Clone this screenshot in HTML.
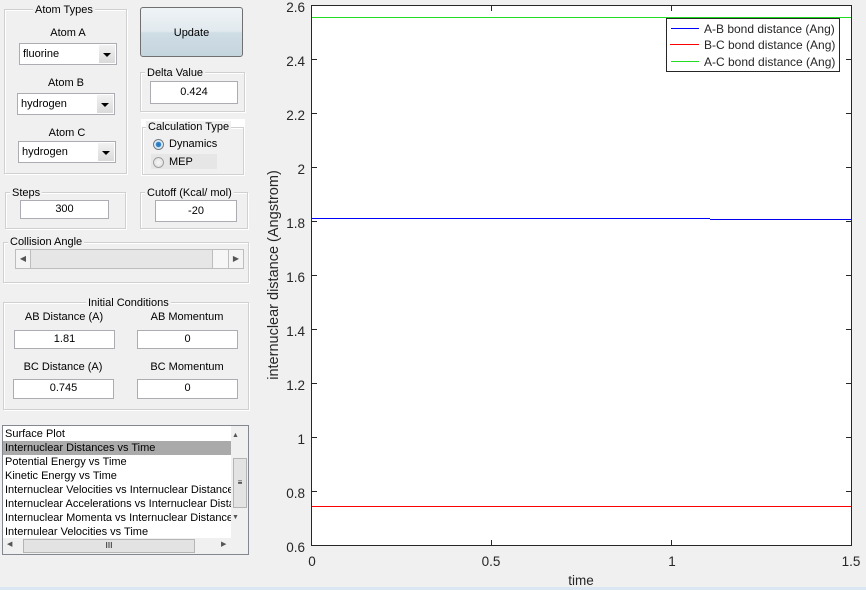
<!DOCTYPE html>
<html><head><meta charset="utf-8"><style>
*{box-sizing:border-box;margin:0;padding:0}
body{width:866px;height:590px;background:#f0f0f0;position:relative;overflow:hidden;font-family:"Liberation Sans",sans-serif;font-size:11px;color:#000}
.a{position:absolute}
.fs{position:absolute;border:1px solid #d0d0d0;box-shadow:inset 1px 1px 0 #fff,1px 1px 0 #fff}
.lg{position:absolute;background:#f0f0f0;padding:0 2px;font-size:11px;line-height:12px;white-space:nowrap}
.inp{position:absolute;background:#fff;border:1px solid #abadb3;text-align:center;font-size:11px;line-height:17px}
.dd{position:absolute;background:#fff;border:1px solid #abadb3;font-size:11px;line-height:20px;padding-left:3px}
.dd b{position:absolute;right:1px;top:1px;bottom:1px;width:16px;background:linear-gradient(#f2f2f2,#dadada)}
.dd b:after{content:"";position:absolute;left:4px;top:8px;border-left:4px solid transparent;border-right:4px solid transparent;border-top:4px solid #000}
.lbl{position:absolute;font-size:11px;text-align:center}
.li{height:14px;line-height:14px;padding-left:2px;white-space:nowrap;overflow:hidden}
</style></head><body>

<div class="fs" style="left:4px;top:9px;width:123px;height:165px"></div>
<div class="lg" style="left:33px;top:4px">Atom Types</div>
<div class="lbl" style="left:19px;top:27px;width:98px">Atom A</div>
<div class="dd" style="left:19px;top:43px;width:98px;height:22px">fluorine<b></b></div>
<div class="lbl" style="left:17px;top:77px;width:98px">Atom B</div>
<div class="dd" style="left:17px;top:93px;width:98px;height:22px">hydrogen<b></b></div>
<div class="lbl" style="left:18px;top:127px;width:98px">Atom C</div>
<div class="dd" style="left:18px;top:141px;width:98px;height:22px">hydrogen<b></b></div>

<div class="a" style="left:140px;top:7px;width:103px;height:50px;border:1px solid #707070;border-radius:3px;background:linear-gradient(#eef3f6 0%,#e2eaef 48%,#cfdde5 52%,#c5d5de 100%);text-align:center;line-height:50px;font-size:11px">Update</div>

<div class="fs" style="left:140px;top:72px;width:105px;height:40px"></div>
<div class="lg" style="left:145px;top:67px">Delta Value</div>
<div class="inp" style="left:150px;top:81px;width:88px;height:23px;line-height:21px">0.424</div>

<div class="a" style="left:141px;top:119px;width:104px;height:57px;background:#fff"></div>
<div class="fs" style="left:142px;top:127px;width:102px;height:48px;background:#f0f0f0"></div>
<div class="lg" style="left:146px;top:121px">Calculation Type</div>
<div class="a" style="left:151px;top:154px;width:66px;height:15px;background:#e6e6e6"></div>
<div class="a" style="left:153px;top:139px;width:11px;height:11px;border-radius:50%;border:1px solid #6f7b86;background:radial-gradient(circle,#1f6fb5 0,#3a8bd0 2.5px,#d9e6f0 3px,#eef2f5 5px)"></div>
<div class="a" style="left:169px;top:138px">Dynamics</div>
<div class="a" style="left:153px;top:157px;width:11px;height:11px;border-radius:50%;border:1px solid #a0a0a0;background:radial-gradient(circle,#f6f6f6,#dcdcdc)"></div>
<div class="a" style="left:169px;top:156px">MEP</div>

<div class="fs" style="left:5px;top:192px;width:121px;height:37px"></div>
<div class="lg" style="left:10px;top:187px">Steps</div>
<div class="inp" style="left:20px;top:200px;width:89px;height:19px">300</div>

<div class="fs" style="left:140px;top:192px;width:108px;height:37px"></div>
<div class="lg" style="left:145px;top:187px">Cutoff (Kcal/ mol)</div>
<div class="inp" style="left:155px;top:200px;width:82px;height:22px;line-height:20px">-20</div>

<div class="fs" style="left:3px;top:242px;width:246px;height:41px"></div>
<div class="lg" style="left:8px;top:236px">Collision Angle</div>
<div class="a" style="left:15px;top:249px;width:229px;height:20px;background:#e6e6e6;border:1px solid #bdbdbd"></div>
<div class="a" style="left:15px;top:249px;width:16px;height:20px;background:#f4f4f4;border:1px solid #bdbdbd;font-size:8px;line-height:18px;text-align:center;color:#555">◀</div>
<div class="a" style="left:212px;top:249px;width:17px;height:20px;background:#f6f6f6;border:1px solid #bdbdbd"></div>
<div class="a" style="left:228px;top:249px;width:16px;height:20px;background:#f4f4f4;border:1px solid #bdbdbd;font-size:8px;line-height:18px;text-align:center;color:#555">▶</div>

<div class="fs" style="left:3px;top:302px;width:246px;height:108px"></div>
<div class="lg" style="left:86px;top:297px">Initial Conditions</div>
<div class="lbl" style="left:14px;top:311px;width:100px">AB Distance (A)</div>
<div class="lbl" style="left:137px;top:311px;width:100px">AB Momentum</div>
<div class="inp" style="left:14px;top:330px;width:101px;height:19px">1.81</div>
<div class="inp" style="left:137px;top:330px;width:101px;height:19px">0</div>
<div class="lbl" style="left:13px;top:361px;width:100px">BC Distance (A)</div>
<div class="lbl" style="left:137px;top:361px;width:100px">BC Momentum</div>
<div class="inp" style="left:13px;top:379px;width:101px;height:20px">0.745</div>
<div class="inp" style="left:137px;top:379px;width:101px;height:20px">0</div>

<div class="a" style="left:2px;top:425px;width:247px;height:130px;background:#fff;border:1px solid #828790;overflow:hidden">
 <div style="position:absolute;left:0;top:1px;width:228px">
  <div class="li">Surface Plot</div>
  <div class="li" style="background:#aaaaaa">Internuclear Distances vs Time</div>
  <div class="li">Potential Energy vs Time</div>
  <div class="li">Kinetic Energy vs Time</div>
  <div class="li">Internuclear Velocities vs Internuclear Distance</div>
  <div class="li">Internuclear Accelerations vs Internuclear Distance</div>
  <div class="li">Internuclear Momenta vs Internuclear Distance</div>
  <div class="li">Internulear Velocities vs Time</div>
 </div>
 <div style="position:absolute;left:228px;top:0;width:17px;height:128px;background:#f0f0f0"></div>
 <div style="position:absolute;left:229px;top:6px;font-size:7px;color:#555">▲</div>
 <div style="position:absolute;left:230px;top:32px;width:14px;height:50px;background:#e3e3e3;border:1px solid #b5b5b5;font-size:8px;text-align:center;line-height:48px">≡</div>
 <div style="position:absolute;left:229px;top:88px;font-size:7px;color:#555">▼</div>
 <div style="position:absolute;left:0;top:112px;width:228px;height:16px;background:#f0f0f0"></div>
 <div style="position:absolute;left:4px;top:114px;font-size:7px;color:#555">◀</div>
 <div style="position:absolute;left:20px;top:113px;width:172px;height:14px;background:#e3e3e3;border:1px solid #b5b5b5;font-size:8px;text-align:center;line-height:12px">III</div>
 <div style="position:absolute;left:218px;top:114px;font-size:7px;color:#555">▶</div>
</div>

<div class="a" style="left:311px;top:5px;width:541px;height:541px;background:#fff;border:1px solid #262626"></div>
<svg class="a" style="left:0;top:0" width="866" height="590">
 <g stroke="#262626" stroke-width="1">
  <line x1="312" y1="59.5" x2="317" y2="59.5"/><line x1="312" y1="113.5" x2="317" y2="113.5"/><line x1="312" y1="167.5" x2="317" y2="167.5"/><line x1="312" y1="221.5" x2="317" y2="221.5"/><line x1="312" y1="275.5" x2="317" y2="275.5"/><line x1="312" y1="329.5" x2="317" y2="329.5"/><line x1="312" y1="383.5" x2="317" y2="383.5"/><line x1="312" y1="437.5" x2="317" y2="437.5"/><line x1="312" y1="491.5" x2="317" y2="491.5"/>
  <line x1="846" y1="59.5" x2="851" y2="59.5"/><line x1="846" y1="113.5" x2="851" y2="113.5"/><line x1="846" y1="167.5" x2="851" y2="167.5"/><line x1="846" y1="221.5" x2="851" y2="221.5"/><line x1="846" y1="275.5" x2="851" y2="275.5"/><line x1="846" y1="329.5" x2="851" y2="329.5"/><line x1="846" y1="383.5" x2="851" y2="383.5"/><line x1="846" y1="437.5" x2="851" y2="437.5"/><line x1="846" y1="491.5" x2="851" y2="491.5"/>
  <line x1="491.5" y1="540" x2="491.5" y2="545"/><line x1="671.5" y1="540" x2="671.5" y2="545"/>
  <line x1="491.5" y1="6" x2="491.5" y2="11"/><line x1="671.5" y1="6" x2="671.5" y2="11"/>
 </g>
 <line x1="312" y1="17.5" x2="851" y2="17.5" stroke="#22dd22" stroke-width="1"/>
 <line x1="312" y1="218.5" x2="710" y2="218.5" stroke="#0000ff" stroke-width="1"/>
 <line x1="710" y1="219.5" x2="851" y2="219.5" stroke="#0000ee" stroke-width="1"/>
 <line x1="312" y1="506.5" x2="851" y2="506.5" stroke="#ff0000" stroke-width="1"/>
 <rect x="666.5" y="18.5" width="173" height="53" fill="#fff" stroke="#262626"/>
 <line x1="671" y1="28.5" x2="699" y2="28.5" stroke="#0000ff"/>
 <line x1="670" y1="44.5" x2="699" y2="44.5" stroke="#ff0000"/>
 <line x1="671" y1="61.5" x2="699" y2="61.5" stroke="#22dd22"/>
 <g font-family="Liberation Sans, sans-serif" font-size="12" fill="#262626">
  <text x="704" y="33">A-B bond distance (Ang)</text>
  <text x="704" y="49">B-C bond distance (Ang)</text>
  <text x="704" y="66">A-C bond distance (Ang)</text>
 </g>
 <g font-family="Liberation Sans, sans-serif" font-size="13.5" fill="#262626" text-anchor="end">
  <text x="305" y="12">2.6</text><text x="305" y="66">2.4</text><text x="305" y="120">2.2</text><text x="305" y="174">2</text><text x="305" y="228">1.8</text><text x="305" y="282">1.6</text><text x="305" y="336">1.4</text><text x="305" y="390">1.2</text><text x="305" y="444">1</text><text x="305" y="498">0.8</text><text x="305" y="552">0.6</text>
 </g>
 <g font-family="Liberation Sans, sans-serif" font-size="13.5" fill="#262626" text-anchor="middle">
  <text x="312" y="566">0</text><text x="491" y="566">0.5</text><text x="672" y="566">1</text><text x="851" y="566">1.5</text>
  <text x="581" y="585">time</text>
  <text x="0" y="0" font-size="14.5" transform="translate(278,275) rotate(-90)">internuclear distance (Angstrom)</text>
 </g>
</svg>
<div class="a" style="left:0;top:587px;width:866px;height:3px;background:#dae6f2"></div>
</body></html>
